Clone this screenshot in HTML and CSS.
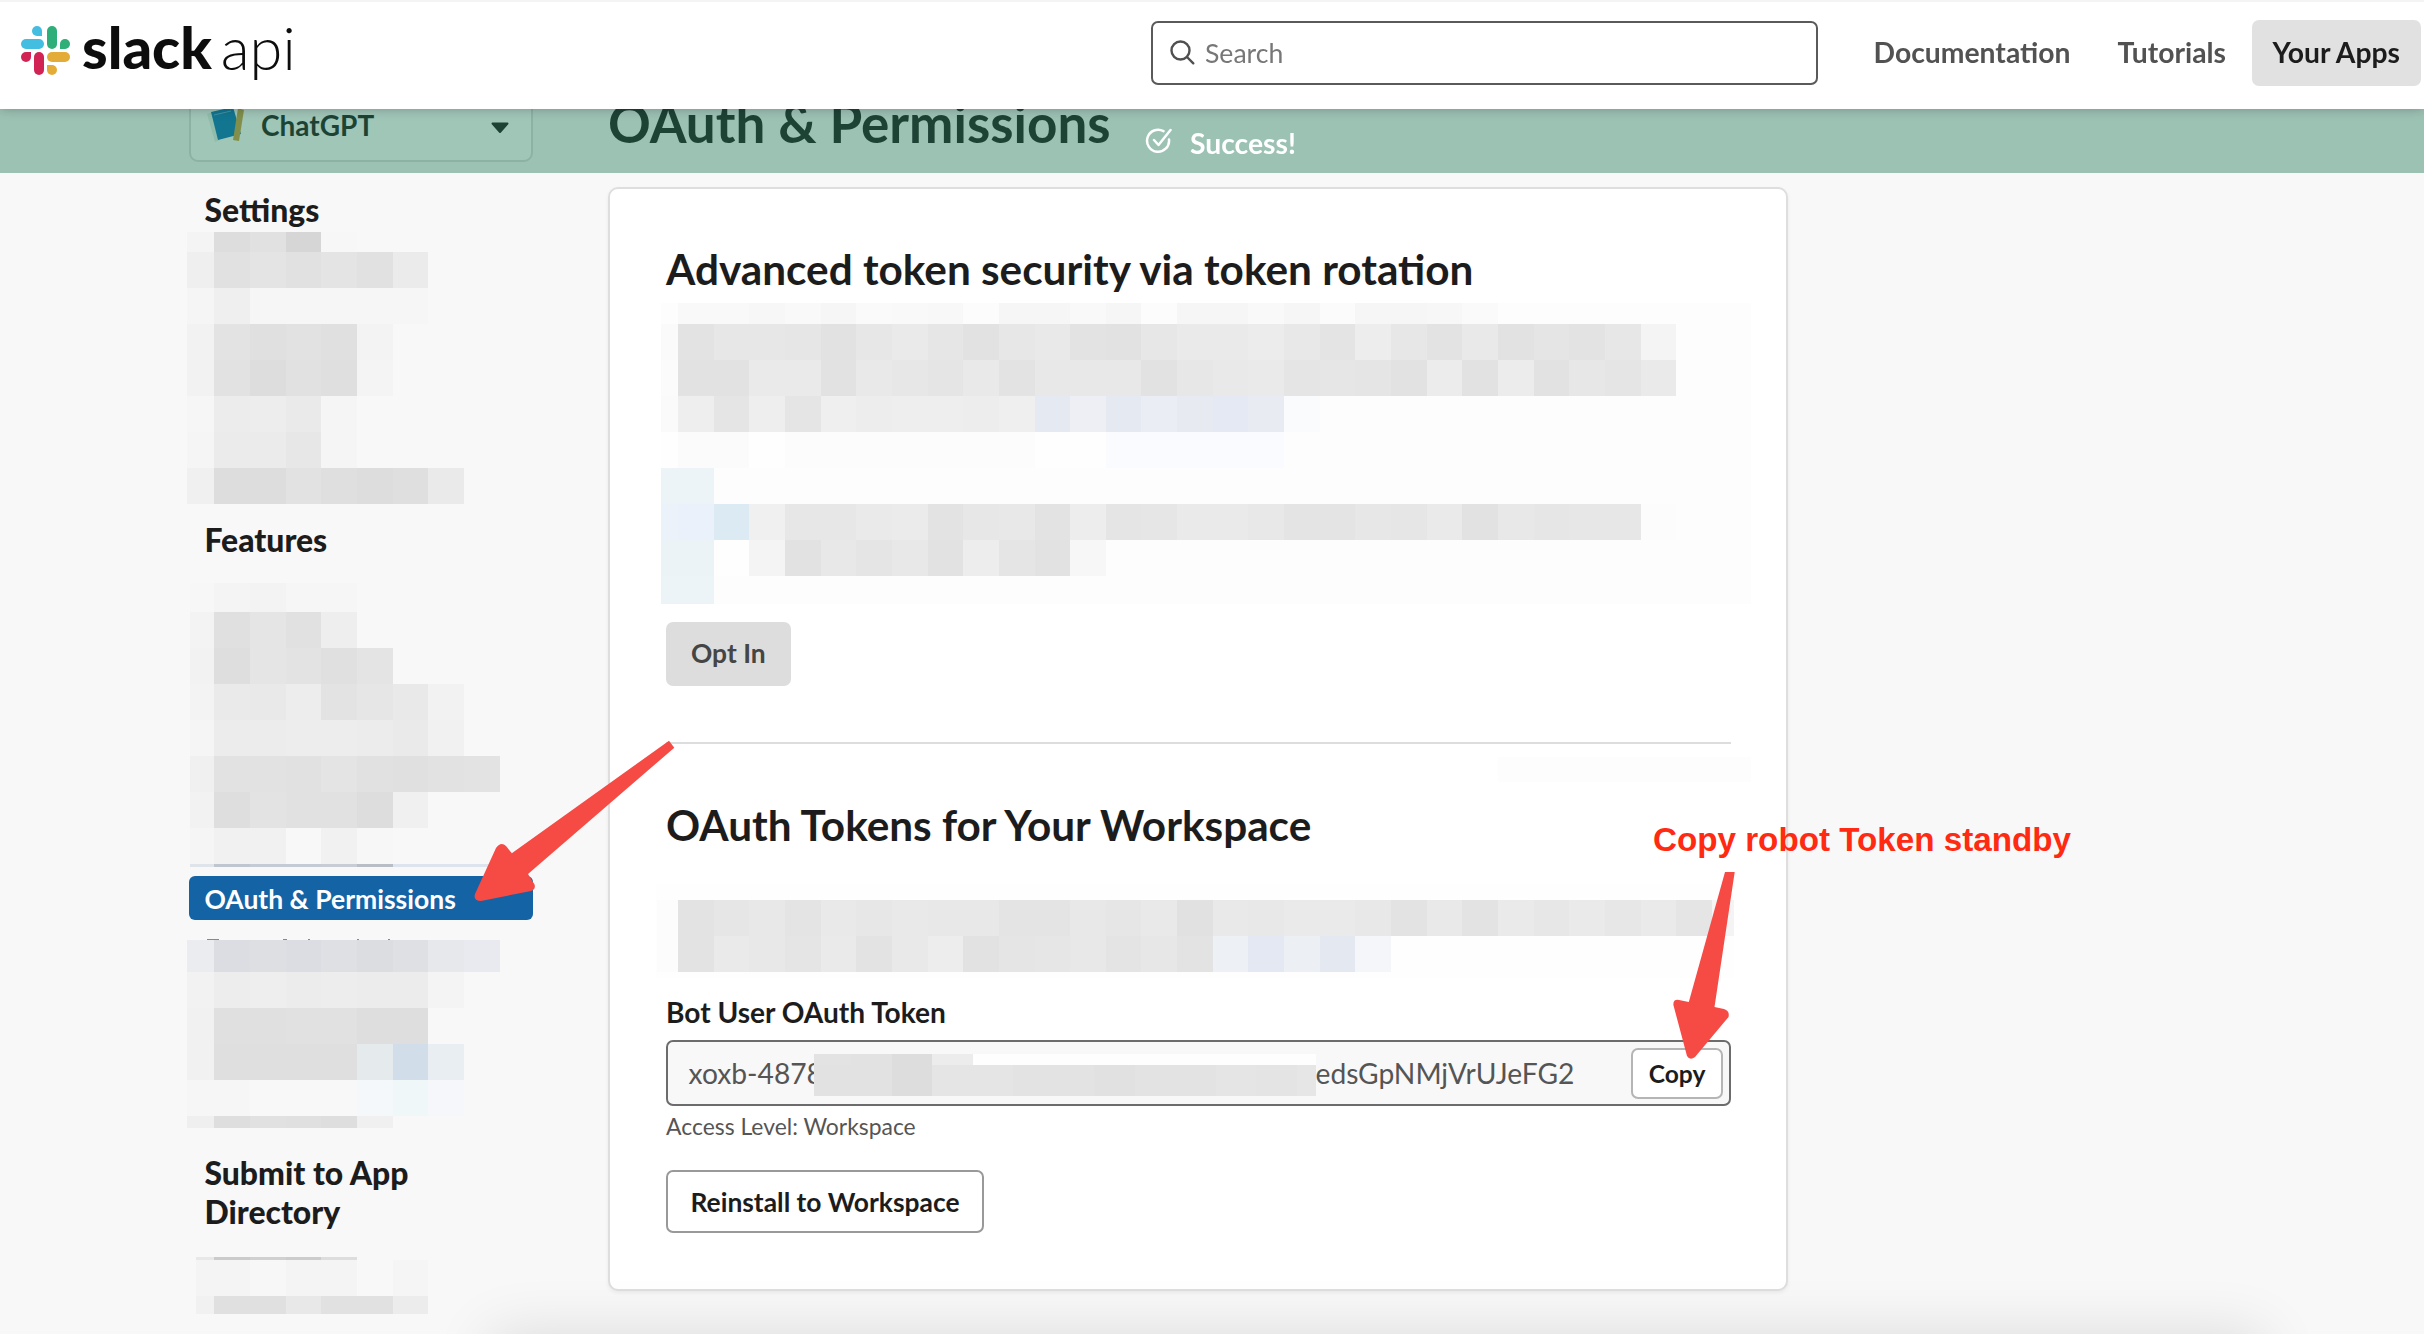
FILE: index.html
```html
<!DOCTYPE html>
<html lang="en">
<head>
<meta charset="utf-8">
<title>Slack API: OAuth &amp; Permissions</title>
<link rel="stylesheet" href="styles.css">
</head>
<body>
<header class="topbar">
  <a class="logo">
    <svg class="logo-mark" width="50" height="50" viewBox="0 0 50 50">
      <g fill="#44bee0"><path d="M16 0a5 5 0 0 1 5 5v5h-5a5 5 0 0 1 0-10z"/><rect x="0" y="13" width="23" height="10" rx="5"/></g>
      <g fill="#2eae78"><rect x="26" y="0" width="10" height="23" rx="5"/><path d="M39 23v-5a5 5 0 1 1 5 5z"/></g>
      <g fill="#e3ac38"><rect x="26" y="26" width="23" height="10" rx="5"/><path d="M26 39h5a5 5 0 1 1-5 5z"/></g>
      <g fill="#d12455"><path d="M10 26v5a5 5 0 1 1-5-5z"/><rect x="13" y="26" width="10" height="23" rx="5"/></g>
    </svg>
    <span class="logo-name"><b>slack</b><i>api</i></span>
  </a>
  <div class="search">
    <svg width="25" height="25" viewBox="0 0 25 25" fill="none" stroke="#505050" stroke-width="2.4" stroke-linecap="round"><circle cx="10.5" cy="10.5" r="9"/><path d="M17 17l6.300 6.300"/></svg>
    <span>Search</span>
  </div>
  <nav class="nav">
    <a>Documentation</a>
    <a>Tutorials</a>
    <a class="current">Your Apps</a>
  </nav>
</header>
<div class="banner">
  <svg width="27" height="26" viewBox="0 0 27 26" fill="none" stroke="#fff" stroke-width="2.500" stroke-linecap="round" stroke-linejoin="round"><path d="M18.500 3.200A11 11 0 1 0 24 11.500"/><path d="M9 12l4.500 5L25.500 2"/></svg>
  <span>Success!</span>
</div>
<div class="page">
  <aside class="sidebar">
    <div class="picker">
      <svg width="38" height="36" viewBox="0 0 38 36"><path d="M0 7l5-2 8 28-5 2z" fill="#e4efe9"/><path d="M4 5L26 0l8 27-23 6z" fill="#0a74bb"/><path d="M7 8l17-4" stroke="#5aa9dc" fill="none"/><path d="M31 1l6 2-5 31-6-1z" fill="#c9a043"/></svg>
      <span>ChatGPT</span>
      <svg class="caret" width="20" height="12" viewBox="0 0 20 12"><path d="M2.500 1.500h15L10 10z" fill="#1d1c1d" stroke="#1d1c1d" stroke-width="2" stroke-linejoin="round"/></svg>
    </div>
    <h3 class="settings">Settings</h3>
    <svg class="mosaic mosaic-a" id="settings-items" viewBox="187 232 344 272"></svg>
    <h3 class="features">Features</h3>
    <svg class="mosaic mosaic-b" id="features-items" viewBox="190 583 344 284"></svg>
    <a class="active">OAuth &amp; Permissions</a>
    <svg class="mosaic mosaic-c" id="events-items" viewBox="187 938 344 191"></svg>
    <h3 class="submit">Submit to App<br>Directory</h3>
    <svg class="mosaic mosaic-d" id="submit-items" viewBox="196 1256 344 58"></svg>
  </aside>
  <main class="main">
    <h1>OAuth &amp; Permissions</h1>
    <section class="card">
      <h2>Advanced token security via token rotation</h2>
      <svg class="mosaic mosaic-e" id="rotation-text" viewBox="661 303 1090 301"></svg>
      <button class="btn btn-muted">Opt In</button>
      <hr>
      <svg class="mosaic mosaic-f" id="divider-patch" viewBox="1498 757 253 25"></svg>
      <h2>OAuth Tokens for Your Workspace</h2>
      <svg class="mosaic mosaic-g" id="tokens-text" viewBox="656 884 1078 94"></svg>
      <label>Bot User OAuth Token</label>
      <div class="token">
        <span class="token-start">xoxb-4878</span>
        <svg class="mosaic token-mask" id="token-mask" width="502" height="42" viewBox="814 1054 502 42"></svg>
        <span class="token-end">edsGpNMjVrUJeFG2</span>
        <button class="copy">Copy</button>
      </div>
      <p class="hint">Access Level: Workspace</p>
      <button class="btn btn-line">Reinstall to Workspace</button>
    </section>
  </main>
</div>
<div class="edge-shade"></div>
<svg class="arrow arrow-left" width="204" height="168" viewBox="472 738 204 168"><path d="M669 740.700L674.300 747.700 528 874 534.500 884.500 Q536 889 531 891L481 901Q473 901 475 894L496 848Q501 841 506 846L511.800 853.300Z" fill="#f64a45"/></svg>
<svg class="arrow arrow-right" width="66" height="192" viewBox="1670 870 66 192"><path d="M1725 872H1734.700L1714.500 1007 1724 1009Q1730 1011 1728.500 1017L1695 1057Q1690 1061 1687 1056L1673.400 1005Q1673 999 1679 1000L1688.800 1002Z" fill="#f64a45"/></svg>
<p class="note">Copy robot Token standby</p>
<script src="script.js"></script>
</body>
</html>
```
FILE: styles.css
```css
* { box-sizing: border-box; }
body {
  margin: 0;
  height: 1334px;
  overflow: hidden;
  position: relative;
  background: #f8f8f8;
  color: #1d1c1d;
  font-family: Lato, "Liberation Sans", sans-serif;
  font-size: 28px;
}
h1, h2, h3, p { margin: 0; white-space: nowrap; }
svg { display: block; flex: none; }
button { font: inherit; color: inherit; margin: 0; padding: 0; white-space: nowrap; }

.topbar {
  position: fixed;
  inset: 0 0 auto 0;
  z-index: 3;
  height: 109px;
  padding: 0 3px 6px 21px;
  display: flex;
  align-items: center;
  background: #fff;
  border-top: 2px solid #f4f4f4;
  box-shadow: 0 1px 10px rgba(0, 0, 0, .22);
}
.logo { display: flex; width: 1130px; gap: 11px; margin-bottom: 3px; }
.logo-name {
  display: flex;
  gap: 9px;
  margin-top: -4px;
  font-size: 58px;
  line-height: 50px;
  height: 50px;
  color: #0d0d0d;
}
.logo-name b { font-weight: 900; }
.logo-name i { font-style: normal; font-weight: 300; font-size: 59.5px; }
.search {
  width: 667px;
  height: 64px;
  padding-left: 17px;
  display: flex;
  align-items: center;
  gap: 10px;
  border: 2px solid #5a5a5a;
  border-radius: 7px;
  color: #777;
  font-size: 26.6px;
}
.nav { margin-left: auto; display: flex; font-size: 28.3px; font-weight: 700; color: #525252; }
.nav a { height: 66px; padding: 0 23.5px; line-height: 65px; }
.nav .current { margin-left: 2px; padding: 0 21px; background: #e1e1e1; border-radius: 7px; color: #1d1c1d; }

.banner {
  position: fixed;
  inset: 109px 0 auto 0;
  z-index: 2;
  height: 64px;
  padding: 3px 0 0 1145px;
  display: flex;
  align-items: center;
  gap: 18px;
  background: rgba(31, 121, 88, .425);
  color: #fff;
  font-size: 28.3px;
  font-weight: 700;
}
.banner svg { margin-top: -4px; }

.page { display: flex; gap: 75px; padding: 90px 0 0 189px; }
.sidebar { width: 344px; }
.picker {
  height: 66px;
  margin-top: 6px;
  padding: 0 21px 9px 16px;
  display: flex;
  align-items: center;
  background: #fff;
  border: 2px solid #ddd;
  border-radius: 9px;
  font-weight: 700;
}
.picker span { margin-left: 16px; }
.caret { margin: 6px 0 0 auto; }
.sidebar h3 {
  height: 39px;
  padding: 1px 0 0 15.5px;
  font-size: 31.9px;
  line-height: 39px;
  font-weight: 900;
}
.settings { margin-top: 28px; }
.features { margin-top: 16px; }
.sidebar .submit { height: 78px; margin-top: 24px; }
.mosaic-a { width: 344px; height: 272px; margin: 3px 0 0 -2px; }
.mosaic-b { width: 344px; height: 284px; margin: 24px 0 0 1px; }
.mosaic-c { width: 344px; height: 191px; margin: 18px 0 0 -2px; }
.mosaic-d { width: 344px; height: 58px; margin: 25px 0 0 7px; }
.active {
  display: block;
  height: 44px;
  margin-top: 9px;
  padding-left: 15.5px;
  line-height: 46px;
  background: #1463a5;
  border-radius: 6px;
  color: #fff;
  font-size: 26.5px;
  font-weight: 700;
}

.main { width: 1180px; }
h1 { font-size: 53px; line-height: 66px; font-weight: 700; }
.card {
  height: 1104px;
  margin-top: 31px;
  padding: 55px 55px 0 56px;
  background: #fff;
  border: 2px solid #dedede;
  border-radius: 10px;
  box-shadow: 0 2px 4px rgba(0, 0, 0, .06);
}
h2 { font-size: 42.3px; line-height: 50px; font-weight: 700; }
.mosaic-e { width: 1090px; height: 301px; margin: 9px 0 18px -5px; }
.mosaic-f { width: 253px; height: 25px; margin: 13px -20px 18px auto; }
.mosaic-g { width: 1078px; height: 94px; margin: 34px 0 17px -10px; }
.btn {
  display: block;
  height: 64px;
  padding: 0 25px 2px;
  border-radius: 7px;
  font-size: 26.4px;
  font-weight: 700;
}
.btn-muted { background: #ddd; border: 0; color: #454545; }
.btn-line { height: 63px; background: #fff; border: 2px solid #999; padding: 0 22.500px; margin-top: 29px; }
hr { height: 2px; margin: 56px 0 0; border: 0; background: #ddd; }
label { display: block; line-height: 34px; font-size: 28.1px; font-weight: 700; }
.token {
  height: 66px;
  margin-top: 11px;
  padding: 0 6px 0 20.500px;
  display: flex;
  align-items: center;
  background: #f8f8f8;
  border: 2px solid #6c6c6c;
  border-radius: 7px;
  color: #555;
  font-size: 28.2px;
}
.token-start { width: 125px; white-space: nowrap; }
.token-mask { position: relative; margin-top: 3px; }
.copy {
  width: 92px;
  height: 51px;
  margin-left: auto;
  background: #fff;
  border: 2px solid #b5b5b5;
  border-radius: 7px;
  color: #1d1c1d;
  font-weight: 700;
  font-size: 24.6px;
}
.hint { margin-top: 5px; font-size: 22.9px; line-height: 30px; color: #555; }

.edge-shade {
  position: fixed;
  left: 500px;
  right: 170px;
  top: 1344px;
  height: 60px;
  box-shadow: 0 0 60px 10px rgba(0, 0, 0, .12);
}
.arrow { position: absolute; z-index: 4; }
.arrow-left { left: 472px; top: 738px; }
.arrow-right { left: 1670px; top: 870px; }
.note {
  position: absolute;
  z-index: 4;
  left: 1653px;
  top: 820px;
  font: 700 33.2px/40px "Liberation Sans", sans-serif;
  color: #ff2a12;
}
```
FILE: script.js
```js
const COL = 35.66;

// Each row: [top, height, left-edge stub colour, cell colours from left to right].
// Two hex digits are a grey, six a colour, "x5" repeats the cell before five more times.
const mosaics = {
  'settings-items': { stub: 187, x: 214.3, rows: [
    [232, 20, 'f4', 'dd e1 d6 f7'],
    [252, 36, 'ef', 'e1 e4 e1 e4 e1 eb'],
    [288, 36, 'f5', 'ef f6 x4'],
    [324, 36, 'f2', 'e3 e0 e2 e0 f3'],
    [360, 36, 'f2', 'e2 dd e1 df f4'],
    [396, 36, 'f6', 'ec ed ea f5'],
    [432, 36, 'f5', 'eb eb e7 f5'],
    [468, 36, 'f0', 'dd dd e2 df dd df ea']] },
  'features-items': { stub: 190.4, x: 214.3, rows: [
    [583, 29, 'f7', 'f4 f3 f6 f6'],
    [612, 36, 'f3', 'e0 e5 e1 ee'],
    [648, 36, 'f2', 'de e5 e3 e0 e4'],
    [684, 36, 'f3', 'ea e9 ed e3 e6 e9 f2'],
    [720, 36, 'f5', 'ec ec ed ed ec ea f1'],
    [756, 36, 'f0', 'e2 e2 e1 e4 e1 e0 e2 e3'],
    [792, 36, 'f2', 'de e3 e1 e1 dd f0'],
    [828, 36, 'f5', 'f1 f1 f8 f1 f7'],
    [864, 3, 'dfe4ea', 'c0c6d0 c5cbd5 c5cbd5 c8ccd4 b9bdc6 dde4ee x2']] },
  'events-items': { stub: 187, x: 214.3, rows: [
    [940, 32, 'ebecef', 'dcdde2 dedfe3 dcdde2 dfe0e4 dcdde1 dfe0e4 e7e8ec e9eaef'],
    [972, 36, 'f2', 'ed ee ec ed ec ec f4'],
    [1008, 36, 'f1', 'e0 e0 e1 e1 de de f8'],
    [1044, 36, 'f1', 'df df df df e5eaed d1deea e8eef2'],
    [1080, 36, 'f6', 'f6 f8 f8 f8 f5f8fa f0f7f8 f5f7fa'],
    [1116, 12, 'ef', 'de e1 e0 de f0']],
    marks: [[207, 12], [283, 4], [308, 2], [357, 2], [388, 2]] },
  'submit-items': { stub: 196, x: 214.3, rows: [
    [1257, 3, 'e8', 'cb d0 cc dd'],
    [1260, 36, 'f4', 'f4 f7 f4 f4 f8 f5'],
    [1296, 18, 'f1', 'e0 e0 e8 e1 e1 ec']] },
  'rotation-text': { stub: 661, x: 677.9, base: 'fd', rows: [
    [303, 21, 'fd', 'f9 f9 f7 f9 f6 fa f9 f8 fc f6 f6 f9 f6 fc f6 f6 f9 f6 fb f6 f6 f7 fa'],
    [324, 36, 'fa', 'e3 e7 e7 e6 e2 e7 ea e6 e2 e7 e9 e3 e2 e7 ea ea ec e8 e4 ed e7 e3 e9 e2 e5 e3 e7 f4'],
    [360, 36, 'fb', 'e2 e2 ea ea e2 e9 e7 e5 e9 e3 e8 e8 e8 e2 e7 e9 ea e5 e6 e5 e2 ec e2 ec e2 e7 e5 ea'],
    [396, 36, 'fa', 'ee e5 ee e5 ef ed ee ee ed ef e5e9f2 edeff5 e4e9f2 ebedf4 e7ebf1 e5e9f3 e8ebf1 fafbfd'],
    [432, 36, 'fe', 'fb fb fe fc x6 fdfefd fdfefd fafbfe x4'],
    [468, 36, 'edf4f7', 'edf4f7'],
    [504, 36, 'ebf2f9', 'eaf1fa dceaf4 f0 e7 e7 ea eb e3 e7 e8 e3 ed e5 e6 ea ea e8 e4 e4 e7 e6 ea e2 e8 e6 e7 e7 fc'],
    [540, 36, 'ecf3f6', 'ecf3f6 fe f4 e2 e8 e5 e8 e2 ed e5 e2 f7'],
    [576, 28, 'edf4f7', 'edf4f7']] },
  'divider-patch': { base: 'fd', rows: [] },
  'tokens-text': { stub: 656.5, x: 677.9, base: 'fe', rows: [
    [900, 36, 'fc', 'e3 e6 e8 e4 e9 e7 e9 e8 e8 e4 e4 e8 e6 e9 e1 e9 e8 ea ea e8 e3 e9 e3 ea e7 ea e7 ea e5 f4'],
    [936, 36, 'fc', 'e3 ea e8 e5 ea e3 e9 ed e2 e5 e6 e8 e4 e7 e3 edf1f5 e4e8f2 ecf0f4 e4e8f1 f5f6fa']] },
  'token-mask': { stub: 814, x: 851, col: 40.5, base: 'fe', rows: [
    [1054, 11, 'e3', 'e2 dd ec'],
    [1065, 31, 'e2', 'e2 dd e5 e5 e3 e3 e1 e3 e3 e5 e4 e6']] }
};

function add(svg, x, y, w, h, colour) {
  const rect = document.createElementNS('http://www.w3.org/2000/svg', 'rect');
  const fill = colour.length === 2 ? colour.repeat(3) : colour;
  for (const [k, v] of Object.entries({ x, y, width: w, height: h, fill: '#' + fill })) {
    rect.setAttribute(k, v);
  }
  rect.setAttribute('shape-rendering', 'crispEdges');
  svg.append(rect);
}

for (const [id, m] of Object.entries(mosaics)) {
  const svg = document.getElementById(id);
  const col = m.col || COL;
  const box = svg.viewBox.baseVal;
  if (m.base) add(svg, box.x, box.y, box.width, box.height, m.base);
  for (const [y, h, stub, cells] of m.rows) {
    add(svg, m.stub, y, m.x - m.stub, h, stub);
    let i = 0;
    let last = '';
    for (const c of cells.split(' ')) {
      const repeat = c[0] === 'x' ? +c.slice(1) : 1;
      if (c[0] !== 'x') last = c;
      for (let n = 0; n < repeat; n++) add(svg, m.x + col * i++, y, col, h, last);
    }
  }
  for (const [x, w] of m.marks || []) add(svg, x, 939, w, 1, '888888');
}
```
